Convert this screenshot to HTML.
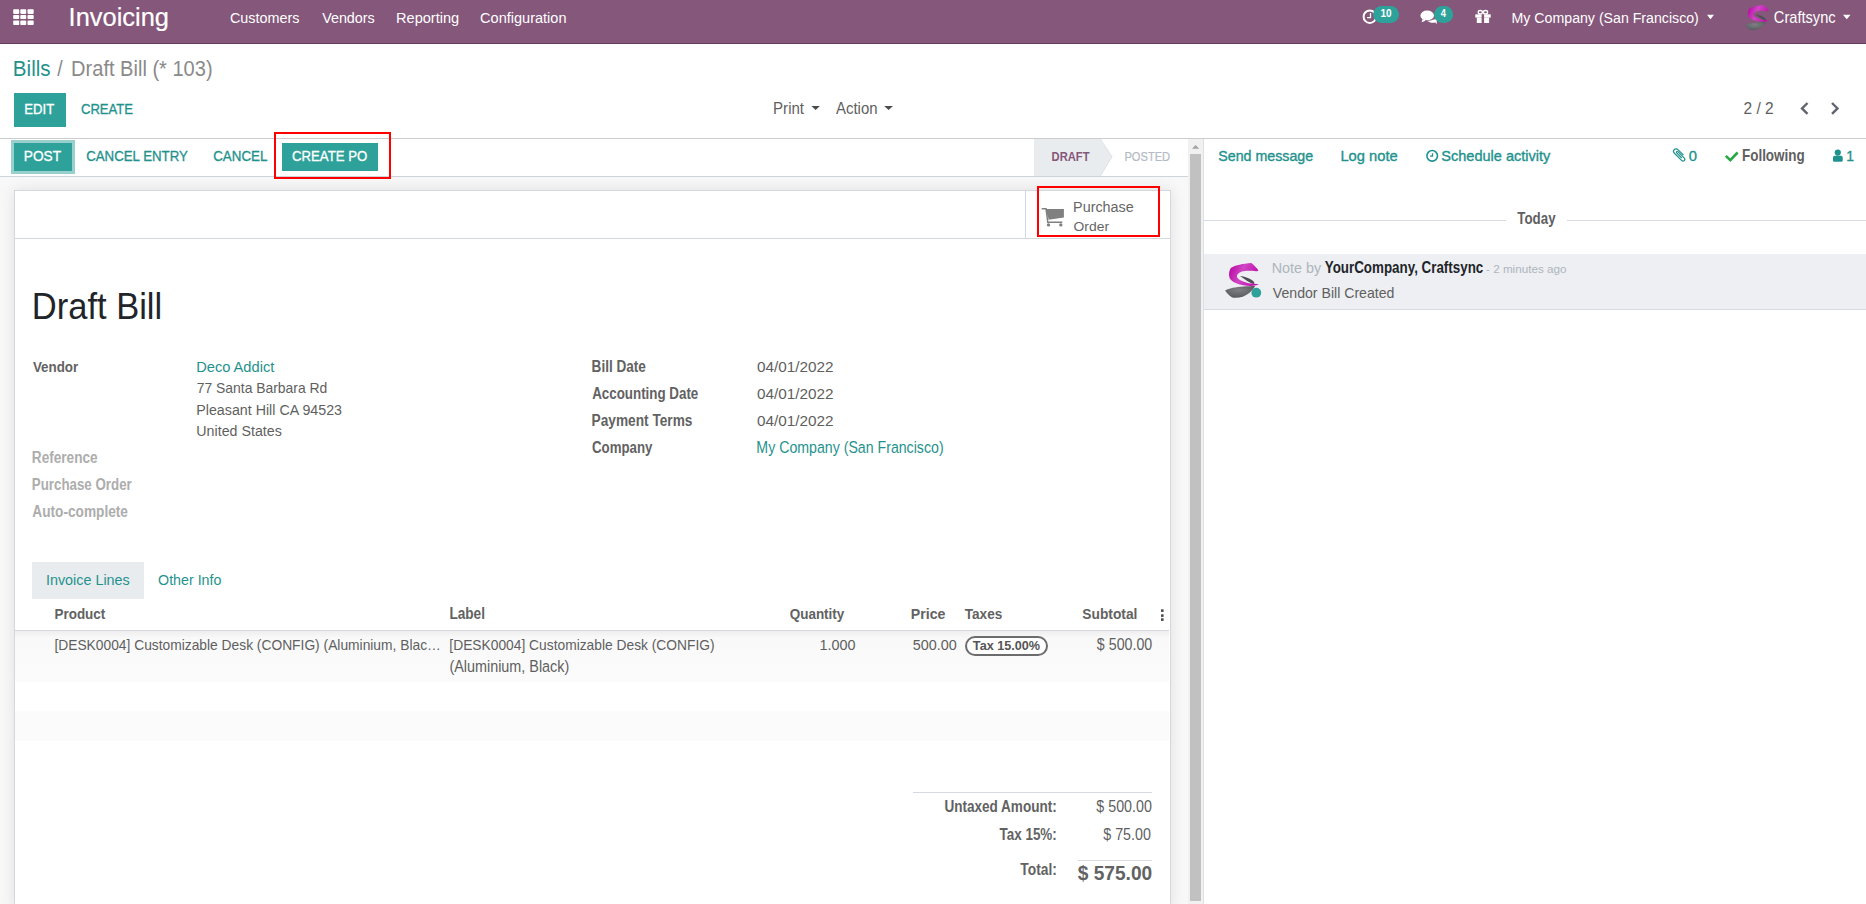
<!DOCTYPE html>
<html><head><meta charset="utf-8"><title>Draft Bill</title>
<style>
html,body{margin:0;padding:0;}
body{width:1866px;height:904px;overflow:hidden;position:relative;background:#fff;font-family:"Liberation Sans",sans-serif;}
.t{position:absolute;white-space:nowrap;}
.r{position:absolute;}
svg.r{overflow:visible;}
</style></head><body>
<div class="r" style="left:0px;top:139px;width:1188px;height:765px;background:#f8f8f8;"></div>
<div class="r" style="left:1204px;top:139px;width:662px;height:765px;background:#ffffff;"></div>
<div class="r" style="left:14px;top:190px;width:1157px;height:720px;background:#ffffff;border:1px solid #d3d7de;box-sizing:border-box;box-shadow:0 0 14px rgba(0,0,0,0.1);"></div>
<div class="r" style="left:0px;top:139px;width:1188px;height:38px;background:#ffffff;border-bottom:1px solid #ced4da;box-sizing:border-box;"></div>
<div class="r" style="left:0px;top:138px;width:1866px;height:1px;background:#cccccc;"></div>
<div class="r" style="left:0px;top:0px;width:1866px;height:43px;background:#85577a;"></div>
<div class="r" style="left:0px;top:43px;width:1866px;height:1px;background:#653c5c;"></div>
<svg class="r" style="left:0;top:0" width="40" height="40"><rect x="13.2" y="9.2" width="6" height="4.7" rx="0.8" fill="#fff"/><rect x="13.2" y="14.9" width="6" height="4.2" rx="0.8" fill="#fff"/><rect x="13.2" y="20.6" width="6" height="4.4" rx="0.8" fill="#fff"/><rect x="20.3" y="9.2" width="5.9" height="4.7" rx="0.8" fill="#fff"/><rect x="20.3" y="14.9" width="5.9" height="4.2" rx="0.8" fill="#fff"/><rect x="20.3" y="20.6" width="5.9" height="4.4" rx="0.8" fill="#fff"/><rect x="27.5" y="9.2" width="6.2" height="4.7" rx="0.8" fill="#fff"/><rect x="27.5" y="14.9" width="6.2" height="4.2" rx="0.8" fill="#fff"/><rect x="27.5" y="20.6" width="6.2" height="4.4" rx="0.8" fill="#fff"/></svg>
<div class="t" style="top:-3px;font-size:25.435px;line-height:40px;color:#fff;left:68.61px;transform:scaleY(0.980);transform-origin:0 29px;-webkit-text-stroke:0.2px #fff;">Invoicing</div>
<div class="t" style="top:-2px;font-size:14.379px;line-height:40px;color:#fff;left:229.98px;transform:scaleY(1.021);transform-origin:0 25px;">Customers</div>
<div class="t" style="top:-2px;font-size:14.353px;line-height:40px;color:#fff;left:322.13px;transform:scaleY(1.023);transform-origin:0 25px;">Vendors</div>
<div class="t" style="top:-2px;font-size:14.582px;line-height:40px;color:#fff;left:396.03px;transform:scaleY(1.007);transform-origin:0 25px;">Reporting</div>
<div class="t" style="top:-2px;font-size:14.545px;line-height:40px;color:#fff;left:480.07px;transform:scaleY(1.009);transform-origin:0 25px;">Configuration</div>
<svg class="r" style="left:1350px;top:0" width="60" height="40"><circle cx="19.8" cy="16.7" r="6.2" fill="none" stroke="#fff" stroke-width="2"/><path d="M20.5 13 V17.6 H17" fill="none" stroke="#fff" stroke-width="1.3"/><rect x="23.1" y="6" width="26" height="17" rx="8.5" fill="#2ea19a"/></svg>
<div class="t" style="top:-6px;font-size:10.000px;line-height:40px;color:#fff;font-weight:700;left:1380.40px;transform:scaleY(1.177);transform-origin:0 23px;">10</div>
<svg class="r" style="left:1414px;top:0" width="50" height="40"><path d="M13 20.5 C15 22.8 19 23.3 21.5 22.5 L23.2 24.3 L22.6 21.6 C23.3 21 23.5 20 23.3 19 Z" fill="#fff"/><ellipse cx="13.2" cy="15.5" rx="6.8" ry="5.1" fill="#fff"/><path d="M8.6 19 L7.6 22.2 L12.2 20.4 Z" fill="#fff"/><path d="M11 20.6 C14 21.2 17.5 20.6 19.3 18.6" fill="none" stroke="#85577a" stroke-width="0.7"/><rect x="20" y="6" width="19.2" height="17" rx="8.5" fill="#2ea19a"/></svg>
<div class="t" style="top:-6px;font-size:9.346px;line-height:40px;color:#fff;font-weight:700;left:1440.86px;transform:scaleY(1.260);transform-origin:0 23px;">4</div>
<svg class="r" style="left:1470px;top:0" width="30" height="40"><ellipse cx="10.3" cy="12.2" rx="2.1" ry="1.7" fill="none" stroke="#fff" stroke-width="1.3"/><ellipse cx="15.5" cy="12.2" rx="2.1" ry="1.7" fill="none" stroke="#fff" stroke-width="1.3"/><rect x="5.3" y="14.3" width="15.4" height="3.3" fill="#fff"/><rect x="6.8" y="17.6" width="12.3" height="5.4" fill="#fff"/><rect x="11.6" y="14.3" width="2.5" height="8.7" fill="#85577a"/></svg>
<div class="t" style="top:-2px;font-size:14.161px;line-height:40px;color:#fff;left:1511.57px;transform:scaleY(1.080);transform-origin:0 25px;">My Company (San Francisco)</div>
<svg class="r" style="left:1700px;top:0" width="20" height="40"><path d="M7 14.7 H14 L10.5 19.2 Z" fill="#fff"/></svg>
<svg class="r" style="left:1745.3px;top:4.8px" width="24.1" height="25.5" viewBox="70 65 762 795" preserveAspectRatio="none"><defs><linearGradient id="gm1" x1="0" y1="0" x2="1" y2="0.3"><stop offset="0" stop-color="#b4009e"/><stop offset="0.5" stop-color="#d046c4"/><stop offset="1" stop-color="#c014ac"/></linearGradient><radialGradient id="gg1" cx="0.45" cy="0.35" r="0.7"><stop offset="0" stop-color="#7d8082"/><stop offset="1" stop-color="#55565b"/></radialGradient></defs><path d="M70,690 C150,640 320,612 480,600 C600,590 680,585 748,586 C710,660 630,760 470,830 C380,855 270,860 220,840 C160,800 100,740 70,690 Z" fill="url(#gg1)"/><path d="M408,362 C530,380 690,430 735,520 L712,548 C620,515 500,430 408,362 Z" fill="#4e4f55"/><path d="M200,180 C300,110 480,80 660,65 C720,110 780,170 822,232 C815,252 790,258 770,256 C650,242 520,240 450,262 C380,290 330,330 338,380 C350,440 450,480 600,525 L832,550 C760,592 620,598 480,572 C340,545 230,500 185,430 C150,370 148,260 200,180 Z" fill="url(#gm1)"/></svg>
<div class="t" style="top:-2px;font-size:14.627px;line-height:40px;color:#fff;left:1773.87px;transform:scaleY(1.080);transform-origin:0 25px;">Craftsync</div>
<svg class="r" style="left:1840px;top:0" width="20" height="40"><path d="M3 14.7 H10.5 L6.75 19.2 Z" fill="#fff"/></svg>
<div class="t" style="top:49px;font-size:20.581px;line-height:40px;color:#1f928d;left:12.85px;transform:scaleY(1.059);transform-origin:0 27px;">Bills</div>
<div class="t" style="top:49px;font-size:19.500px;line-height:40px;color:#8a8a8a;left:57.30px;transform:scaleY(1.100);transform-origin:0 27px;">/</div>
<div class="t" style="top:49px;font-size:20.058px;line-height:40px;color:#8a8a8a;left:71.10px;transform:scaleY(1.120);transform-origin:0 27px;">Draft Bill (* 103)</div>
<div class="r" style="left:14px;top:93px;width:52px;height:34px;background:#2ea19a;"></div>
<div class="t" style="top:90px;font-size:13.149px;line-height:40px;color:#fff;left:24.25px;transform:scaleY(1.139);transform-origin:0 24px;-webkit-text-stroke:0.3px #fff;">EDIT</div>
<div class="t" style="top:90px;font-size:13.085px;line-height:40px;color:#1f928d;left:80.95px;transform:scaleY(1.144);transform-origin:0 24px;-webkit-text-stroke:0.3px #1f928d;">CREATE</div>
<div class="t" style="top:89px;font-size:15.076px;line-height:40px;color:#5f5f5f;left:773.09px;transform:scaleY(1.041);transform-origin:0 25px;">Print</div>
<svg class="r" style="left:805px;top:100px" width="20" height="15"><path d="M6.4 5.9 H14.9 L10.65 10 Z" fill="#4c4c4c"/></svg>
<div class="t" style="top:89px;font-size:14.954px;line-height:40px;color:#5f5f5f;left:836.00px;transform:scaleY(1.050);transform-origin:0 25px;">Action</div>
<svg class="r" style="left:880px;top:100px" width="20" height="15"><path d="M4.2 5.9 H13 L8.6 10 Z" fill="#4c4c4c"/></svg>
<div class="t" style="top:89px;font-size:15.501px;line-height:40px;color:#5f5f5f;left:1743.52px;transform:scaleY(1.013);transform-origin:0 25px;">2 / 2</div>
<svg class="r" style="left:1795px;top:95px" width="50" height="25"><path d="M12.5 8 L7 13.45 L12.5 18.9" fill="none" stroke="#5f6670" stroke-width="2.4"/><path d="M37 8 L42.5 13.45 L37 18.9" fill="none" stroke="#5f6670" stroke-width="2.4"/></svg>
<div class="r" style="left:11px;top:140px;width:64px;height:34px;background:#97d0cc;"></div>
<div class="r" style="left:14px;top:143px;width:58px;height:28px;background:#2ea19a;"></div>
<div class="t" style="top:137px;font-size:13.702px;line-height:40px;color:#fff;left:23.80px;transform:scaleY(1.103);transform-origin:0 24px;-webkit-text-stroke:0.3px #fff;">POST</div>
<div class="t" style="top:137px;font-size:13.272px;line-height:40px;color:#1f928d;left:86.14px;transform:scaleY(1.139);transform-origin:0 24px;-webkit-text-stroke:0.3px #1f928d;">CANCEL ENTRY</div>
<div class="t" style="top:137px;font-size:13.358px;line-height:40px;color:#1f928d;left:213.23px;transform:scaleY(1.132);transform-origin:0 24px;-webkit-text-stroke:0.3px #1f928d;">CANCEL</div>
<div class="r" style="left:282px;top:143px;width:96px;height:28px;background:#2ea19a;"></div>
<div class="t" style="top:137px;font-size:13.202px;line-height:40px;color:#fff;left:292.04px;transform:scaleY(1.145);transform-origin:0 24px;-webkit-text-stroke:0.3px #fff;">CREATE PO</div>
<div class="r" style="left:274px;top:132px;width:117px;height:47px;background:transparent;border:2px solid #f00;box-sizing:border-box;"></div>
<svg class="r" style="left:1030px;top:139px" width="158" height="37"><path d="M4 0 H70.3 L82 17.8 L70.3 37 H4 Z" fill="#e9ecef"/><path d="M70.3 0 L82 17.8 L70.3 37" fill="none" stroke="#dee2e6" stroke-width="1"/></svg>
<div class="t" style="top:137px;font-size:11.208px;line-height:40px;color:#85577a;font-weight:700;left:1051.57px;transform:scaleY(1.219);transform-origin:0 24px;">DRAFT</div>
<div class="t" style="top:137px;font-size:11.142px;line-height:40px;color:#b4bac4;left:1124.41px;transform:scaleY(1.122);transform-origin:0 24px;-webkit-text-stroke:0.2px #b4bac4;">POSTED</div>
<div class="r" style="left:15px;top:238px;width:1155px;height:1px;background:#d3d7de;"></div>
<div class="r" style="left:1025px;top:191px;width:1px;height:47px;background:#d3d7de;"></div>
<svg class="r" style="left:1038px;top:202px" width="30" height="30"><path d="M3.7 6.1 H8.6 V7.6 H3.7 Z M7.2 6.1 H8.7 L10.6 20.8 H9.1 Z M8.5 7.1 H25.9 V15.6 L10.6 17.8 Z M9 19.6 H24.3 V21.1 H9 Z" fill="#808080"/><circle cx="10.5" cy="22.9" r="1.7" fill="#808080"/><circle cx="22.8" cy="22.9" r="1.7" fill="#808080"/></svg>
<div class="t" style="top:187px;font-size:14.390px;line-height:40px;color:#666;left:1073.05px;transform:scaleY(1.020);transform-origin:0 25px;">Purchase</div>
<div class="t" style="top:206px;font-size:13.908px;line-height:40px;color:#666;left:1073.57px;transform:scaleY(0.961);transform-origin:0 25px;">Order</div>
<div class="r" style="left:1037px;top:186px;width:123px;height:51px;background:transparent;border:2px solid #f00;box-sizing:border-box;"></div>
<div class="t" style="top:287px;font-size:34.545px;line-height:40px;color:#212529;left:31.74px;transform:scaleY(1.050);transform-origin:0 32px;">Draft Bill</div>
<div class="t" style="top:348px;font-size:13.353px;line-height:40px;color:#626262;font-weight:700;left:32.93px;transform:scaleY(1.154);transform-origin:0 24px;">Vendor</div>
<div class="t" style="top:347px;font-size:14.648px;line-height:40px;color:#1f928d;left:196.23px;transform:scaleY(0.972);transform-origin:0 25px;">Deco Addict</div>
<div class="t" style="top:368px;font-size:13.912px;line-height:40px;color:#5f5f5f;left:196.70px;transform:scaleY(1.076);transform-origin:0 25px;">77 Santa Barbara Rd</div>
<div class="t" style="top:390px;font-size:14.253px;line-height:40px;color:#5f5f5f;left:196.26px;transform:scaleY(1.020);transform-origin:0 25px;">Pleasant Hill CA 94523</div>
<div class="t" style="top:411px;font-size:14.249px;line-height:40px;color:#5f5f5f;left:196.33px;">United States</div>
<div class="t" style="top:439px;font-size:13.629px;line-height:40px;color:#adadad;font-weight:700;left:31.81px;transform:scaleY(1.184);transform-origin:0 24px;">Reference</div>
<div class="t" style="top:466px;font-size:13.320px;line-height:40px;color:#adadad;font-weight:700;left:31.83px;transform:scaleY(1.222);transform-origin:0 24px;">Purchase Order</div>
<div class="t" style="top:493px;font-size:13.679px;line-height:40px;color:#adadad;font-weight:700;left:32.36px;transform:scaleY(1.179);transform-origin:0 24px;">Auto-complete</div>
<div class="t" style="top:348px;font-size:13.572px;line-height:40px;color:#626262;font-weight:700;left:591.62px;transform:scaleY(1.189);transform-origin:0 24px;">Bill Date</div>
<div class="t" style="top:375px;font-size:13.371px;line-height:40px;color:#626262;font-weight:700;left:592.17px;transform:scaleY(1.174);transform-origin:0 24px;">Accounting Date</div>
<div class="t" style="top:402px;font-size:13.686px;line-height:40px;color:#626262;font-weight:700;left:591.61px;transform:scaleY(1.168);transform-origin:0 24px;">Payment Terms</div>
<div class="t" style="top:429px;font-size:13.282px;line-height:40px;color:#626262;font-weight:700;left:591.97px;transform:scaleY(1.259);transform-origin:0 24px;">Company</div>
<div class="t" style="top:347px;font-size:15.341px;line-height:40px;color:#5f5f5f;left:756.89px;transform:scaleY(0.976);transform-origin:0 25px;">04/01/2022</div>
<div class="t" style="top:374px;font-size:15.341px;line-height:40px;color:#5f5f5f;left:756.89px;transform:scaleY(0.947);transform-origin:0 25px;">04/01/2022</div>
<div class="t" style="top:401px;font-size:15.341px;line-height:40px;color:#5f5f5f;left:756.89px;transform:scaleY(0.966);transform-origin:0 25px;">04/01/2022</div>
<div class="t" style="top:428px;font-size:14.177px;line-height:40px;color:#1f928d;left:756.37px;transform:scaleY(1.100);transform-origin:0 25px;">My Company (San Francisco)</div>
<div class="r" style="left:32px;top:562px;width:112px;height:37px;background:#e9ecef;"></div>
<div class="t" style="top:560px;font-size:14.361px;line-height:40px;color:#1f928d;left:45.91px;transform:scaleY(1.063);transform-origin:0 25px;">Invoice Lines</div>
<div class="t" style="top:560px;font-size:14.266px;line-height:40px;color:#1f928d;left:158.06px;transform:scaleY(1.070);transform-origin:0 25px;">Other Info</div>
<div class="t" style="top:595px;font-size:13.459px;line-height:40px;color:#626262;font-weight:700;left:54.53px;transform:scaleY(1.112);transform-origin:0 24px;">Product</div>
<div class="t" style="top:595px;font-size:13.629px;line-height:40px;color:#626262;font-weight:700;left:449.41px;transform:scaleY(1.162);transform-origin:0 24px;">Label</div>
<div class="t" style="top:595px;font-size:13.491px;line-height:40px;color:#626262;font-weight:700;left:789.66px;transform:scaleY(1.142);transform-origin:0 24px;">Quantity</div>
<div class="t" style="top:594px;font-size:14.213px;line-height:40px;color:#626262;font-weight:700;left:910.78px;transform:scaleY(1.084);transform-origin:0 25px;">Price</div>
<div class="t" style="top:595px;font-size:13.616px;line-height:40px;color:#626262;font-weight:700;left:964.76px;transform:scaleY(1.132);transform-origin:0 24px;">Taxes</div>
<div class="t" style="top:595px;font-size:13.795px;line-height:40px;color:#626262;font-weight:700;left:1082.29px;transform:scaleY(1.117);transform-origin:0 24px;">Subtotal</div>
<svg class="r" style="left:1159px;top:606px" width="8" height="16"><rect x="2" y="3.3" width="2.6" height="2.6" fill="#4c4c4c"/><rect x="2" y="8.3" width="2.6" height="2.6" fill="#4c4c4c"/><rect x="2" y="12.3" width="2.6" height="2.6" fill="#4c4c4c"/></svg>
<div class="r" style="left:15px;top:630px;width:1154px;height:1px;background:#d6d9de;"></div>
<div class="r" style="left:15px;top:631px;width:1154px;height:51px;background:#fbfbfb;background:linear-gradient(#eeeeee,#f9f9f9 7px,#fbfbfb);"></div>
<div class="r" style="left:15px;top:711px;width:1154px;height:30px;background:#fbfbfb;"></div>
<div class="t" style="top:626px;font-size:13.800px;line-height:40px;color:#5f5f5f;left:54.43px;transform:scaleY(1.100);transform-origin:0 24px;">[DESK0004] Customizable Desk (CONFIG) (Aluminium, Blac…</div>
<div class="t" style="top:626px;font-size:13.805px;line-height:40px;color:#5f5f5f;left:449.33px;transform:scaleY(1.100);transform-origin:0 24px;">[DESK0004] Customizable Desk (CONFIG)</div>
<div class="t" style="top:647px;font-size:14.397px;line-height:40px;color:#5f5f5f;left:449.44px;transform:scaleY(1.100);transform-origin:0 25px;">(Aluminium, Black)</div>
<div class="t" style="top:625px;font-size:14.435px;line-height:40px;color:#5f5f5f;left:819.42px;transform:scaleY(1.037);transform-origin:0 25px;">1.000</div>
<div class="t" style="top:625px;font-size:14.405px;line-height:40px;color:#5f5f5f;left:912.72px;transform:scaleY(1.039);transform-origin:0 25px;">500.00</div>
<div class="r" style="left:965px;top:636px;width:83px;height:20px;background:#fff;border:2px solid #6c6c6c;border-radius:10px;box-sizing:border-box;"></div>
<div class="t" style="top:626px;font-size:12.658px;line-height:40px;color:#555;font-weight:700;left:972.87px;transform:scaleY(1.079);transform-origin:0 24px;">Tax 15.00%</div>
<div class="t" style="top:625px;font-size:14.226px;line-height:40px;color:#5f5f5f;left:1096.86px;transform:scaleY(1.100);transform-origin:0 25px;">$ 500.00</div>
<div class="r" style="left:913px;top:792px;width:239px;height:1px;background:#d6d9de;"></div>
<div class="t" style="top:788px;font-size:13.554px;line-height:40px;color:#626262;font-weight:700;left:944.39px;transform:scaleY(1.255);transform-origin:0 24px;">Untaxed Amount:</div>
<div class="t" style="top:787px;font-size:14.278px;line-height:40px;color:#5f5f5f;left:1096.36px;transform:scaleY(1.100);transform-origin:0 25px;">$ 500.00</div>
<div class="t" style="top:816px;font-size:13.437px;line-height:40px;color:#626262;font-weight:700;left:999.57px;transform:scaleY(1.255);transform-origin:0 24px;">Tax 15%:</div>
<div class="t" style="top:815px;font-size:14.286px;line-height:40px;color:#5f5f5f;left:1103.26px;transform:scaleY(1.100);transform-origin:0 25px;">$ 75.00</div>
<div class="r" style="left:1078px;top:860px;width:74px;height:1px;background:#d6d9de;"></div>
<div class="t" style="top:851px;font-size:13.792px;line-height:40px;color:#626262;font-weight:700;left:1020.36px;transform:scaleY(1.201);transform-origin:0 24px;">Total:</div>
<div class="t" style="top:854px;font-size:19.140px;line-height:40px;color:#626262;font-weight:700;left:1077.71px;transform:scaleY(1.050);transform-origin:0 26px;">$ 575.00</div>
<div class="r" style="left:1188px;top:139px;width:15px;height:765px;background:#f1f1f1;"></div>
<div class="r" style="left:1190px;top:153.8px;width:11px;height:747px;background:#c1c1c1;"></div>
<svg class="r" style="left:1188px;top:139px" width="15" height="14"><path d="M4 9.8 H11.2 L7.6 5.9 Z" fill="#a3a3a3"/></svg>
<div class="r" style="left:1203px;top:139px;width:1px;height:765px;background:#dde1e6;"></div>
<div class="t" style="top:136px;font-size:14.225px;line-height:40px;color:#1f928d;left:1218.26px;transform:scaleY(1.052);transform-origin:0 25px;-webkit-text-stroke:0.35px #1f928d;">Send message</div>
<div class="t" style="top:136px;font-size:14.714px;line-height:40px;color:#1f928d;left:1340.42px;transform:scaleY(1.017);transform-origin:0 25px;-webkit-text-stroke:0.35px #1f928d;">Log note</div>
<svg class="r" style="left:1420px;top:145px" width="25" height="22"><circle cx="12.2" cy="10.85" r="5.3" fill="none" stroke="#1f928d" stroke-width="1.6"/><path d="M12.5 8.2 V11.2 H10" fill="none" stroke="#1f928d" stroke-width="1.3"/></svg>
<div class="t" style="top:136px;font-size:14.531px;line-height:40px;color:#1f928d;left:1441.35px;transform:scaleY(1.030);transform-origin:0 25px;-webkit-text-stroke:0.35px #1f928d;">Schedule activity</div>
<svg class="r" style="left:1670px;top:146px" width="20" height="20"><path d="M13.5 9.2 L8.2 3.9 C6.9 2.6 5 2.6 4.2 3.6 C3.2 4.6 3.4 6.3 4.6 7.5 L11.3 14.2 C12.3 15.2 13.6 15.3 14.3 14.6 C15 13.9 14.9 12.6 13.9 11.6 L8.1 5.8 C7.6 5.3 7 5.3 6.7 5.6 C6.3 6 6.4 6.6 6.9 7.1 L11.8 12" fill="none" stroke="#1f928d" stroke-width="1.2"/></svg>
<div class="t" style="top:136px;font-size:14.792px;line-height:40px;color:#1f928d;left:1688.71px;transform:scaleY(0.963);transform-origin:0 25px;-webkit-text-stroke:0.35px #1f928d;">0</div>
<svg class="r" style="left:1720px;top:146px" width="25" height="20"><path d="M5.8 9.9 L10.3 14.2 L17.6 6.5" fill="none" stroke="#28a745" stroke-width="2.6"/></svg>
<div class="t" style="top:137px;font-size:13.495px;line-height:40px;color:#5f5f5f;font-weight:700;left:1741.92px;transform:scaleY(1.196);transform-origin:0 24px;">Following</div>
<svg class="r" style="left:1828px;top:146px" width="20" height="20"><circle cx="9.8" cy="6.6" r="3.1" fill="#1f928d"/><path d="M5 11.5 C5 10.3 6 9.7 7.2 9.7 H12.5 C13.7 9.7 14.7 10.3 14.7 11.5 V14.6 C14.7 15.4 14.2 15.8 13.4 15.8 H6.3 C5.5 15.8 5 15.4 5 14.6 Z" fill="#1f928d"/></svg>
<div class="t" style="top:136px;font-size:14.000px;line-height:40px;color:#1f928d;left:1846.15px;transform:scaleY(1.090);transform-origin:0 25px;-webkit-text-stroke:0.35px #1f928d;">1</div>
<div class="r" style="left:1204px;top:220px;width:302px;height:1px;background:#d6dae0;"></div>
<div class="r" style="left:1567px;top:220px;width:299px;height:1px;background:#d6dae0;"></div>
<div class="t" style="top:200px;font-size:13.310px;line-height:40px;color:#5f5f5f;font-weight:700;left:1517.37px;transform:scaleY(1.256);transform-origin:0 24px;">Today</div>
<div class="r" style="left:1204px;top:254px;width:662px;height:55px;background:#eeeff2;"></div>
<div class="r" style="left:1204px;top:309px;width:662px;height:1px;background:#d8dce2;"></div>
<svg class="r" style="left:1222px;top:260px" width="40" height="40" viewBox="0 0 904 904" preserveAspectRatio="none"><defs><linearGradient id="gm2" x1="0" y1="0" x2="1" y2="0.3"><stop offset="0" stop-color="#b4009e"/><stop offset="0.5" stop-color="#d046c4"/><stop offset="1" stop-color="#c014ac"/></linearGradient><radialGradient id="gg2" cx="0.45" cy="0.35" r="0.7"><stop offset="0" stop-color="#7d8082"/><stop offset="1" stop-color="#55565b"/></radialGradient></defs><path d="M70,690 C150,640 320,612 480,600 C600,590 680,585 748,586 C710,660 630,760 470,830 C380,855 270,860 220,840 C160,800 100,740 70,690 Z" fill="url(#gg2)"/><path d="M408,362 C530,380 690,430 735,520 L712,548 C620,515 500,430 408,362 Z" fill="#4e4f55"/><path d="M200,180 C300,110 480,80 660,65 C720,110 780,170 822,232 C815,252 790,258 770,256 C650,242 520,240 450,262 C380,290 330,330 338,380 C350,440 450,480 600,525 L832,550 C760,592 620,598 480,572 C340,545 230,500 185,430 C150,370 148,260 200,180 Z" fill="url(#gm2)"/></svg>
<svg class="r" style="left:1250px;top:286px" width="14" height="14"><circle cx="6.3" cy="6.7" r="4.9" fill="#2ea19a"/></svg>
<div class="t" style="top:248px;font-size:14.324px;line-height:40px;color:#adb5bd;left:1271.75px;transform:scaleY(1.055);transform-origin:0 25px;">Note by</div>
<div class="t" style="top:249px;font-size:13.384px;line-height:40px;color:#212529;font-weight:700;left:1324.73px;transform:scaleY(1.216);transform-origin:0 24px;">YourCompany, Craftsync</div>
<div class="t" style="top:249px;font-size:11.668px;line-height:40px;color:#adb5bd;left:1486.07px;transform:scaleY(0.959);transform-origin:0 24px;">- 2 minutes ago</div>
<div class="t" style="top:273px;font-size:14.125px;line-height:40px;color:#5f5f5f;left:1272.83px;transform:scaleY(1.070);transform-origin:0 25px;">Vendor Bill Created</div>
</body></html>
